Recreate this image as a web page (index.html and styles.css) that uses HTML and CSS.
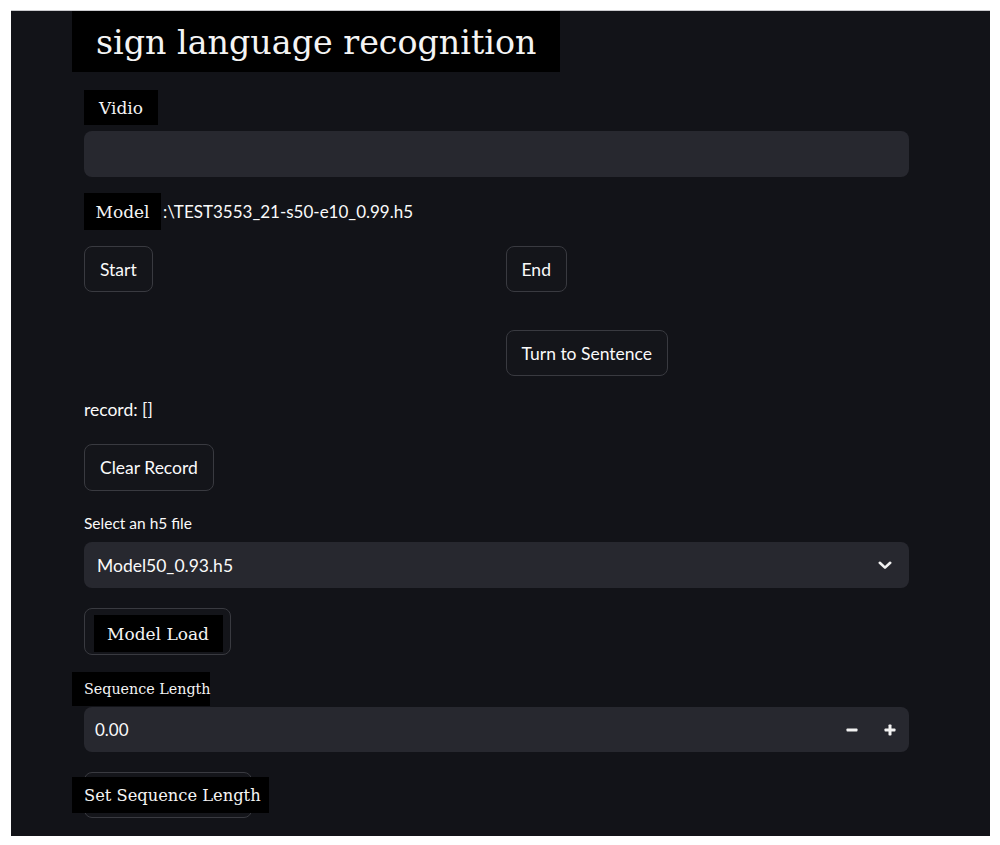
FILE: index.html
```html
<!DOCTYPE html>
<html lang="en">
<head>
<meta charset="utf-8">
<title>sign language recognition</title>
<link rel="stylesheet" href="styles.css">
</head>
<body>
<div class="app">
  <main class="main">
    <h1 class="title">sign language recognition</h1>

    <div class="ov ov-vidio">Vidio</div>
    <div class="field"></div>

    <div class="model-row">
      <span class="ov ov-model">Model</span>
      <span class="path">:\TEST3553_21-s50-e10_0.99.h5</span>
    </div>

    <div class="controls">
      <div class="col">
        <button class="btn">Start</button>
      </div>
      <div class="col">
        <button class="btn">End</button>
        <button class="btn">Turn to Sentence</button>
      </div>
    </div>

    <p class="record">record: []</p>

    <button class="btn btn-clear">Clear Record</button>

    <div class="label">Select an h5 file</div>
    <div class="select">
      <span class="select-value">Model50_0.93.h5</span>
      <svg class="chev" width="14" height="9" viewBox="0 0 14 9"><path d="M1.8 1.8 L7 6.6 L12.2 1.8" stroke="#f2f2f2" stroke-width="2.6" fill="none" stroke-linecap="round" stroke-linejoin="round"/></svg>
    </div>

    <button class="btn btn-load"><span class="ov ov-load">Model Load</span></button>

    <div class="ov ov-seq">Sequence Length</div>
    <div class="number">
      <span class="num-value">0.00</span>
      <span class="step"><svg width="12" height="4" viewBox="0 0 12 4"><rect x="0.5" y="0.5" width="11" height="3" rx="0.8" fill="#f2f2f2"/></svg></span>
      <span class="step"><svg width="12" height="12" viewBox="0 0 12 12"><rect x="0.5" y="4.5" width="11" height="3" rx="0.8" fill="#f2f2f2"/><rect x="4.5" y="0.5" width="3" height="11" rx="0.8" fill="#f2f2f2"/></svg></span>
    </div>

    <button class="btn btn-set"><span class="ov ov-set">Set Sequence Length</span></button>
  </main>
</div>
</body>
</html>
```

FILE: styles.css
```css
html, body {
  margin: 0;
  padding: 0;
  background: #ffffff;
}

.app {
  margin: 10px 10px 0 11px;
  border-top: 1px solid #c9c9cc;
  background: #121318;
  height: 825px;
  overflow: hidden;
}

.main {
  width: 825px;
  padding-left: 73px;
  display: flex;
  flex-direction: column;
  align-items: flex-start;
  font-family: Lato, "Noto Sans", sans-serif;
  color: #fafafa;
}

.ov {
  background: #000;
  color: #f4f4f4;
  font-family: "DejaVu Serif", "Liberation Serif", serif;
  font-weight: normal;
  display: flex;
  align-items: center;
  box-sizing: border-box;
  white-space: nowrap;
}

.title {
  margin: 0 0 0 -12px;
  width: 488px;
  height: 61px;
  box-sizing: border-box;
  padding: 2px 0 0 24px;
  background: #000;
  color: #f4f4f4;
  font-family: "DejaVu Serif", "Liberation Serif", serif;
  font-weight: normal;
  font-size: 33.3px;
  display: flex;
  align-items: center;
  white-space: nowrap;
}

.ov-vidio {
  margin-top: 18px;
  height: 35px;
  padding: 0 15px;
  font-size: 17px;
}

.field {
  margin-top: 6px;
  width: 100%;
  height: 46px;
  background: #27282f;
  border-radius: 8px;
}

.model-row {
  margin-top: 16px;
  display: flex;
  align-items: center;
}

.ov-model {
  height: 37px;
  width: 77px;
  justify-content: center;
  font-size: 17px;
}

.path {
  margin-left: 2px;
  font-size: 17px;
}

.controls {
  margin-top: 16px;
  width: 100%;
  display: grid;
  grid-template-columns: 1fr 1fr;
  column-gap: 18px;
}

.col {
  display: flex;
  flex-direction: column;
  align-items: flex-start;
  gap: 38px;
}

.btn {
  margin: 0;
  height: 46px;
  box-sizing: border-box;
  padding: 0 15px 0 15px;
  border: 1px solid #393a40;
  border-radius: 8px;
  background: #14151a;
  color: #fafafa;
  font-family: Lato, "Noto Sans", sans-serif;
  font-size: 17.5px;
  display: inline-flex;
  align-items: center;
  white-space: nowrap;
}

.record {
  margin: 22px 0 0;
  font-size: 17.5px;
  line-height: 24px;
}

.btn-clear {
  margin-top: 22px;
  height: 47px;
}

.label {
  margin-top: 21px;
  font-size: 15.5px;
  line-height: 22px;
}

.select {
  margin-top: 8px;
  width: 100%;
  height: 46px;
  box-sizing: border-box;
  padding: 0 17px 0 13px;
  background: #27282f;
  border-radius: 8px;
  display: flex;
  align-items: center;
  justify-content: space-between;
  font-size: 17.5px;
}

.chev {
  display: block;
}

.btn-load {
  margin-top: 20px;
  height: 47px;
  width: 147px;
  padding: 6px 8px 0 9px;
  align-items: flex-start;
  justify-content: center;
}

.ov-load {
  width: 129px;
  height: 37px;
  flex-shrink: 0;
  justify-content: center;
  font-size: 17px;
}

.ov-seq {
  margin-top: 17px;
  margin-left: -12.5px;
  width: 138.5px;
  height: 34px;
  padding-left: 12.5px;
  font-size: 14.3px;
}

.number {
  margin-top: 1px;
  width: 100%;
  height: 45px;
  box-sizing: border-box;
  padding-left: 11px;
  background: #27282f;
  border-radius: 8px;
  display: flex;
  align-items: center;
  font-size: 17px;
}

.num-value {
  flex: 1;
}

.step {
  width: 38px;
  height: 100%;
  display: flex;
  align-items: center;
  justify-content: center;
}

.btn-set {
  margin-top: 20px;
  width: 168px;
  padding: 0;
}

.ov-set {
  flex-shrink: 0;
  margin-left: -13.5px;
  width: 197.5px;
  height: 36px;
  padding-left: 12.5px;
  font-size: 16.3px;
}
```
